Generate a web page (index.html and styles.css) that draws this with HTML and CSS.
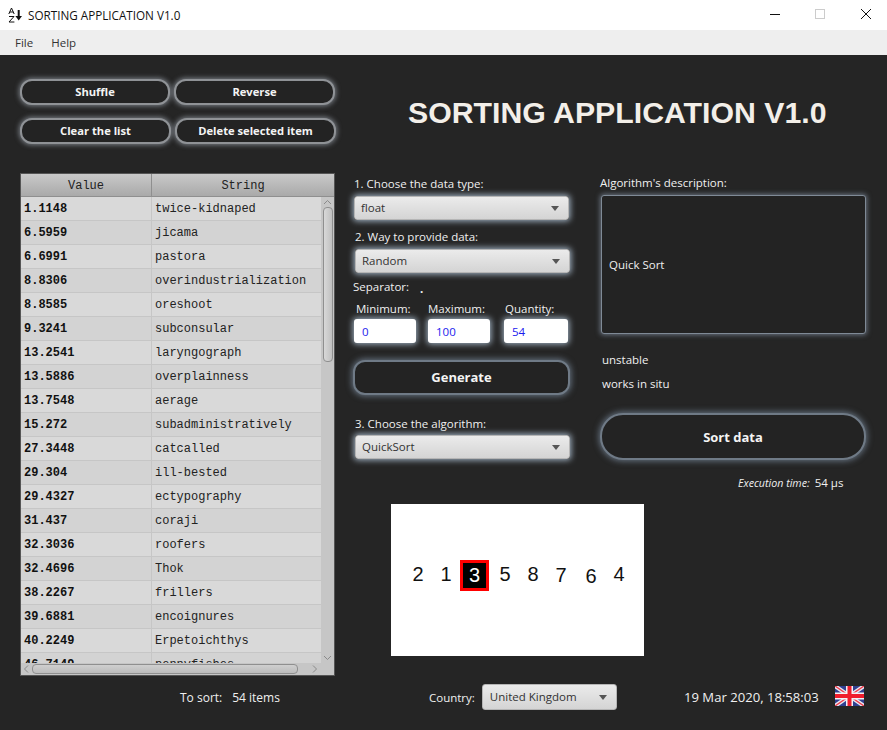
FILE: index.html
```html
<!DOCTYPE html>
<html lang="en">
<head>
<meta charset="utf-8">
<title>SORTING APPLICATION V1.0</title>
<link rel="stylesheet" href="styles.css">
</head>
<body>
<header class="titlebar">
  <svg class="app-icon" width="16" height="18" viewBox="0 0 16 18">
    <path class="ink" d="M4.5 2 L1.8 8 M4.5 2 L7.2 8 M2.8 6 H6.2 M2 10.5 H7 L2 16 H7.4" />
    <path class="ink thick" d="M11.7 4 V11" />
    <path class="fill" d="M8.4 10 H15 L11.7 14.5 Z" />
  </svg>
  <span class="win-title">SORTING APPLICATION V1.0</span>
  <div class="win-controls">
    <svg width="12" height="12" viewBox="0 0 12 12"><path class="ink" d="M0 5.5 H10"/></svg>
    <svg width="12" height="12" viewBox="0 0 12 12"><rect class="dis" x="0.5" y="0.5" width="9" height="9"/></svg>
    <svg width="12" height="12" viewBox="0 0 12 12"><path class="ink" d="M1 0 L11 10 M11 0 L1 10"/></svg>
  </div>
</header>
<nav class="menubar"><span>File</span><span>Help</span></nav>
<main class="app">
  <section class="top">
    <div class="actions">
      <div class="act-row">
        <button class="btn b-shuffle">Shuffle</button>
        <button class="btn b-reverse">Reverse</button>
      </div>
      <div class="act-row second">
        <button class="btn b-clear">Clear the list</button>
        <button class="btn b-delete">Delete selected item</button>
      </div>
    </div>
    <h1 class="headline">SORTING APPLICATION V1.0</h1>
  </section>
  <section class="body">
    <div class="table">
      <div class="thead"><div class="th c1">Value</div><div class="th c2">String</div></div>
      <div class="tbody">
        <div class="rows">
          <div class="row"><div class="c1 val">1.1148</div><div class="c2">twice-kidnaped</div></div>
          <div class="row"><div class="c1 val">6.5959</div><div class="c2">jicama</div></div>
          <div class="row"><div class="c1 val">6.6991</div><div class="c2">pastora</div></div>
          <div class="row"><div class="c1 val">8.8306</div><div class="c2">overindustrialization</div></div>
          <div class="row"><div class="c1 val">8.8585</div><div class="c2">oreshoot</div></div>
          <div class="row"><div class="c1 val">9.3241</div><div class="c2">subconsular</div></div>
          <div class="row"><div class="c1 val">13.2541</div><div class="c2">laryngograph</div></div>
          <div class="row"><div class="c1 val">13.5886</div><div class="c2">overplainness</div></div>
          <div class="row"><div class="c1 val">13.7548</div><div class="c2">aerage</div></div>
          <div class="row"><div class="c1 val">15.272</div><div class="c2">subadministratively</div></div>
          <div class="row"><div class="c1 val">27.3448</div><div class="c2">catcalled</div></div>
          <div class="row"><div class="c1 val">29.304</div><div class="c2">ill-bested</div></div>
          <div class="row"><div class="c1 val">29.4327</div><div class="c2">ectypography</div></div>
          <div class="row"><div class="c1 val">31.437</div><div class="c2">coraji</div></div>
          <div class="row"><div class="c1 val">32.3036</div><div class="c2">roofers</div></div>
          <div class="row"><div class="c1 val">32.4696</div><div class="c2">Thok</div></div>
          <div class="row"><div class="c1 val">38.2267</div><div class="c2">frillers</div></div>
          <div class="row"><div class="c1 val">39.6881</div><div class="c2">encoignures</div></div>
          <div class="row"><div class="c1 val">40.2249</div><div class="c2">Erpetoichthys</div></div>
          <div class="row"><div class="c1 val">46.7149</div><div class="c2">pennyfishes</div></div>
        </div>
        <div class="vscroll">
          <svg width="13" height="10" viewBox="0 0 13 10"><path class="arrow" d="M3 7 L6.5 3.5 L10 7"/></svg>
          <div class="vtrack"><div class="vthumb"></div></div>
          <svg width="13" height="10" viewBox="0 0 13 10"><path class="arrow" d="M3 3 L6.5 6.5 L10 3"/></svg>
        </div>
      </div>
      <div class="hscroll">
        <svg width="11" height="12" viewBox="0 0 11 12"><path class="arrow" d="M7 2.5 L3.5 6 L7 9.5"/></svg>
        <div class="hthumb"></div>
        <svg width="11" height="12" viewBox="0 0 11 12"><path class="arrow" d="M4 2.5 L7.5 6 L4 9.5"/></svg>
      </div>
    </div>
    <div class="middle">
      <label class="lbl l1">1. Choose the data type:</label>
      <div class="combo glow c-type"><span>float</span><i class="caret"></i></div>
      <label class="lbl l2">2. Way to provide data:</label>
      <div class="combo glow c-way"><span>Random</span><i class="caret"></i></div>
      <div class="sep"><span>Separator:</span><span class="sep-val">.</span></div>
      <div class="fields">
        <div class="field f-min"><label class="lbl">Minimum:</label><div class="input">0</div></div>
        <div class="field f-max"><label class="lbl">Maximum:</label><div class="input">100</div></div>
        <div class="field f-qty"><label class="lbl">Quantity:</label><div class="input">54</div></div>
      </div>
      <button class="btn generate">Generate</button>
      <label class="lbl l3">3. Choose the algorithm:</label>
      <div class="combo glow c-algo"><span>QuickSort</span><i class="caret"></i></div>
      <div class="visual">
        <span>2</span><span>1</span><span class="current">3</span><span>5</span><span>8</span><span class="low1">7</span><span class="low2">6</span><span>4</span>
      </div>
    </div>
    <div class="right">
      <label class="lbl desc-label">Algorithm's description:</label>
      <div class="desc">Quick Sort</div>
      <div class="prop p1">unstable</div>
      <div class="prop p2">works in situ</div>
      <button class="btn sort">Sort data</button>
      <div class="exec"><em>Execution time:</em><span>54 µs</span></div>
    </div>
  </section>
  <footer class="foot">
    <div class="count"><span>To sort:</span><span>54 items</span></div>
    <div class="country"><span>Country:</span><div class="combo c-country"><span>United Kingdom</span><i class="caret"></i></div></div>
    <div class="clock">19 Mar 2020, 18:58:03</div>
    <svg class="flag" width="29" height="20" viewBox="0 0 29 20">
      <rect width="29" height="20" fill="#2f3f8f"/>
      <path d="M0 0 L29 20 M29 0 L0 20" stroke="#e8e8f0" stroke-width="4"/>
      <path d="M0 0 L29 20 M29 0 L0 20" stroke="#ee3a4a" stroke-width="1.4"/>
      <path d="M14.5 0 V20 M0 10 H29" stroke="#f2f2f6" stroke-width="7"/>
      <path d="M14.5 0 V20 M0 10 H29" stroke="#f01c2c" stroke-width="4"/>
    </svg>
  </footer>
</main>
</body>
</html>
```
FILE: styles.css
```css
* { box-sizing: border-box; }
html, body { margin: 0; padding: 0; }
body {
  width: 887px; height: 730px; overflow: hidden;
  font-family: "Open Sans", "Noto Sans", sans-serif;
  font-size: 11.5px; color: #f0f0f0; background: #252525;
  display: flex; flex-direction: column;
}
.titlebar { height: 30px; background: #fff; display: flex; align-items: center; padding-left: 7px; color: #111; flex: none; }
.app-icon { margin-right: 5px; margin-top: -1px; }
.ink { fill: none; stroke: #111; stroke-width: 1; }
.thick { stroke-width: 2; }
.fill { fill: #111; }
.dis { fill: none; stroke: #ccc; stroke-width: 1; }
.win-title { font-size: 11.7px; }
.win-controls { margin-left: auto; display: flex; gap: 33px; padding-right: 15px; }
.menubar { height: 25px; background: #eee; display: flex; align-items: center; gap: 18px; padding-left: 15px; color: #333; flex: none; }
.app { flex: 1; display: flex; flex-direction: column; min-height: 0; }

.btn {
  font-family: inherit; font-weight: 700; font-size: 11.2px; color: #f4f4f4;
  background: #232323; border: 2px solid #8f9296; border-radius: 12px;
  box-shadow: 0 0 5px 1px rgba(205,215,230,.5); padding: 0 0 2px;
  display: flex; align-items: center; justify-content: center;
}
.top { height: 118px; display: flex; flex: none; }
.actions { padding: 24px 0 0 20px; width: 336px; flex: none; }
.act-row { display: flex; gap: 4px; height: 26px; }
.act-row.second { margin-top: 13px; }
.b-shuffle { width: 150px; }
.b-reverse { width: 161px; }
.b-clear { width: 151px; }
.b-delete { width: 161px; }
.headline { margin: 40px 0 0 72px; font-size: 30.25px; line-height: 36px; font-weight: 700; color: #f3efe9; white-space: nowrap; font-family: "Liberation Sans", sans-serif; }

.body { display: flex; height: 503px; flex: none; }
.table { margin-left: 20px; width: 315px; height: 503px; background: #d0d0d0; border: 1px solid #555; display: flex; flex-direction: column; flex: none; font-family: "Liberation Mono", monospace; font-size: 12px; color: #222; overflow: hidden; }
.thead { display: flex; height: 23px; flex: none; background: linear-gradient(#c9c9c9, #a9a9a9); border-bottom: 1px solid #8f8f8f; }
.th { display: flex; align-items: center; justify-content: center; padding-top: 1px; }
.th.c1 { border-right: 1px solid #8f8f8f; }
.c1 { width: 131px; flex: none; }
.c2 { flex: 1; }
.tbody { flex: 1; display: flex; min-height: 0; }
.rows { flex: 1; min-width: 0; overflow: hidden; }
.row { display: flex; height: 24px; border-bottom: 1px solid #c6c6c6; background: #d9d9d9; align-items: center; }
.row .c1 { height: 100%; display: flex; align-items: center; padding-left: 3px; border-right: 1px solid #c6c6c6; }
.row .c2 { padding-left: 3px; }
.row:nth-child(even) { background: #d3d3d3; }
.val { font-weight: 700; color: #111; }
.vscroll { width: 13px; flex: none; background: #c6c6c6; display: flex; flex-direction: column; align-items: center; }
.vtrack { flex: 1; width: 100%; }
.vthumb { width: 10px; height: 155px; margin: 0 auto; background: linear-gradient(90deg,#d8d8d8,#c0c0c0); border: 1px solid #8f8f8f; border-radius: 4px; }
.arrow { fill: none; stroke: #8a8a8a; stroke-width: 1; }
.hscroll { height: 12px; flex: none; background: #c6c6c6; display: flex; align-items: center; padding-right: 14px; }
.hthumb { width: 266px; height: 10px; background: linear-gradient(#cfcfcf,#bcbcbc); border: 1px solid #8f8f8f; border-radius: 4px; margin-right: auto; }

.middle { width: 217px; margin-left: 18px; flex: none; display: flex; flex-direction: column; align-items: flex-start; position: relative; }
.lbl { display: block; color: #f0f0f0; line-height: 16px; white-space: nowrap; }
.l1 { margin: 3px 0 4px 1px; }
.l2 { margin: 9px 0 4px 2px; }
.l3 { margin: 21px 0 3px 2px; }
.combo { height: 24px; background: linear-gradient(#ebebeb, #d4d4d4); border-radius: 3px; border: 1px solid #b5b5b5; color: #333; display: flex; align-items: center; justify-content: space-between; padding: 0 9px 2px 6px; }
.glow { box-shadow: 0 0 6px 1px rgba(200,222,245,.8); width: 215px; }
.c-type { margin-left: 1px; }
.c-way, .c-algo { margin-left: 2px; }
.caret { margin-top: 2px; width: 0; height: 0; border: 4.5px solid transparent; border-top: 5px solid #555; border-bottom: 0; }
.sep { display: flex; margin-top: 6px; line-height: 16px; height: 16px; }
.sep-val { margin: 2px 0 0 11px; font-weight: 700; }
.fields { display: flex; margin-top: 6px; }
.field { display: flex; flex-direction: column; }
.field .lbl { margin-bottom: 2px; }
.f-min { margin-left: 1px; width: 74px; }
.f-min .lbl { margin-left: 2px; }
.f-max { width: 76px; }
.f-qty .lbl { margin-left: 1px; }
.input { background: #fff; border-radius: 3px; height: 24px; color: #1b1bee; padding: 1px 8px 0; display: flex; align-items: center; box-shadow: 0 0 6px 1px rgba(200,222,245,.8); }
.f-min .input { width: 62px; }
.f-max .input { width: 62px; }
.f-qty .input { width: 64px; }
.generate { width: 217px; height: 35px; margin-top: 17px; font-size: 13px; border-color: #6f7a86; box-shadow: 0 0 6px 1px rgba(170,195,225,.5); }
.visual { width: 253px; height: 152px; margin: 45px 0 0 38px; padding: 0 0 12px 2px; background: #fff; display: flex; align-items: center; justify-content: center; font-family: "Liberation Sans", sans-serif; font-size: 20px; color: #111; }
.visual span { width: 28px; flex: none; text-align: center; line-height: 30px; }
.visual .current { background: #000; color: #fff; border: 3px solid #f00; margin: 3px 2px 0 0; width: 29px; height: 31px; line-height: 25px; }
.low1 { position: relative; top: 1px; }
.visual .low2 { position: relative; top: 2px; margin-left: 2px; }

.right { width: 266px; margin-left: 30px; flex: none; display: flex; flex-direction: column; align-items: flex-start; }
.desc-label { margin: 2px 0 4px 0; }
.desc { margin-left: 1px; width: 265px; height: 139px; background: #232323; border: 1px solid #7f8a96; border-radius: 3px; box-shadow: 0 0 5px 1px rgba(170,190,215,.5); display: flex; align-items: center; padding-left: 7px; }
.prop { margin-left: 2px; line-height: 16px; }
.p1 { margin-top: 18px; }
.p2 { margin-top: 8px; }
.sort { width: 266px; height: 47px; margin-top: 21px; border-radius: 23px; font-size: 13px; padding: 0; border-color: #6f7a86; box-shadow: 0 0 6px 1px rgba(170,195,225,.5); }
.exec { margin: 15px 0 0 138px; display: flex; gap: 5px; line-height: 16px; align-items: baseline; }
.exec em { font-size: 10.7px; }

.foot { flex: 1; display: flex; align-items: center; position: relative; padding-bottom: 12px; }
.count { margin-left: 180px; width: 249px; display: flex; gap: 10px; font-size: 12px; }
.country { display: flex; align-items: center; gap: 7px; width: 255px; }
.c-country { width: 135px; height: 26px; padding-left: 7px; }
.clock { width: 151px; font-size: 13.1px; white-space: nowrap; }
.flag { margin-top: -2px; filter: blur(.4px); }
```
